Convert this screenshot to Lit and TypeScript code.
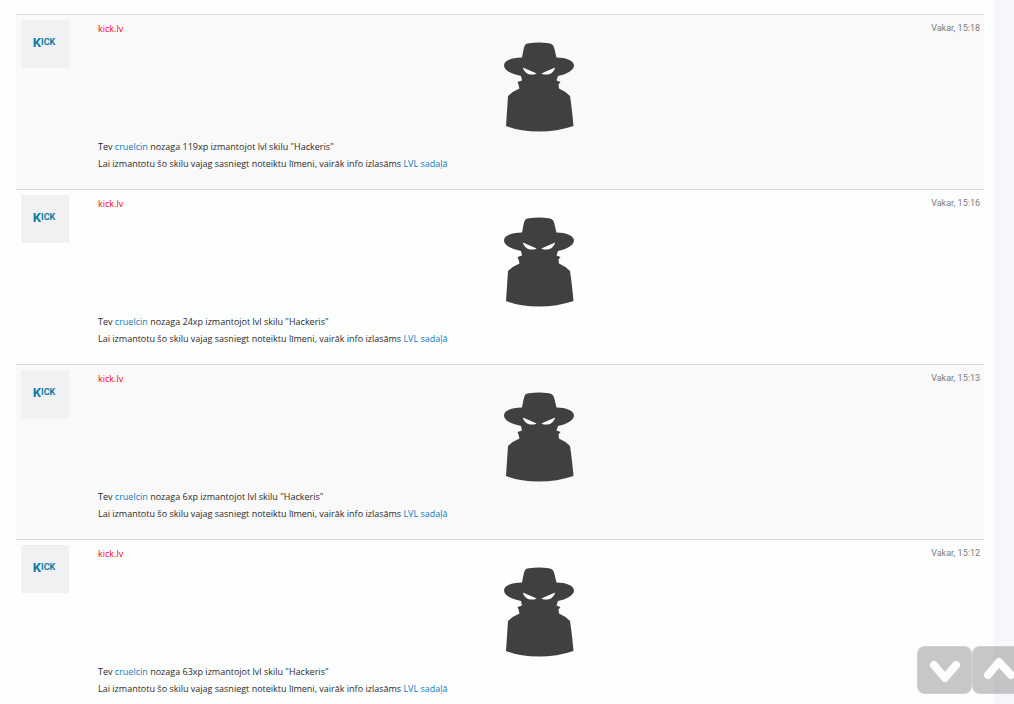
import { LitElement, html, css } from "lit";
import { customElement, property } from "lit/decorators.js";

interface Message {
  time: string;
  xp: number;
}

const messages: Message[] = [
  { time: "Vakar, 15:18", xp: 119 },
  { time: "Vakar, 15:16", xp: 24 },
  { time: "Vakar, 15:13", xp: 6 },
  { time: "Vakar, 15:12", xp: 63 },
];

@customElement("message-row")
class MessageRow extends LitElement {
  @property({ attribute: false }) message!: Message;

  static styles = css`
    :host {
      display: block;
    }
    .row {
      display: grid;
      grid-template-columns: 48px minmax(0, 1fr);
      column-gap: 29px;
      padding: 5px 4px 17px 5px;
      align-items: start;
    }
    .avatar {
      display: flex;
      box-sizing: border-box;
      width: 48px;
      height: 48px;
      padding: 0 2px 4px 0;
      align-items: center;
      justify-content: center;
      background: #f1f1f1;
      color: #0b7ba8;
      font: bold 9px/12px Roboto, sans-serif;
      text-decoration: none;
    }
    .initial {
      font-size: 13px;
      vertical-align: text-top;
    }
    .head {
      display: flex;
      justify-content: space-between;
      line-height: 17px;
    }
    .author {
      color: #ff0022;
      text-decoration: none;
    }
    time {
      color: #7d7d7d;
      font: 9px/17px Roboto, sans-serif;
    }
    .spy {
      display: block;
      width: 70px;
      height: 90px;
      margin: 5px auto 6px;
      fill: #404040;
    }
    p {
      margin: 0;
      line-height: 17px;
    }
    p a {
      color: #0f7dc2;
      text-decoration: none;
    }
  `;

  render() {
    return html`
      <article class="row">
        <a class="avatar" href="#kick"><span><span class="initial">K</span>ICK</span></a>
        <div>
          <div class="head">
            <a class="author" href="#kick">kick.lv</a>
            <time>${this.message.time}</time>
          </div>
          <svg class="spy" viewBox="0 0 70 90" aria-hidden="true">
            <path d="M18 15.5 C19 11 19.5 6 21 3 Q22 1.500 25 1.300 Q35 -0.500 45 1.300 Q48.500 1.800 49.500 4 C51 8 51.500 12 52.500 15.500 C62 15.500 70 18.500 70 23.500 C70 28.500 62 32.500 54 34 L52.500 38.500 L56.500 40 L54.500 42.500 L55 46.500 Q61 49 66 54 Q68 67 69.500 84 Q53 89.500 35 89.500 Q15 89.500 2 84 L4 54 Q9 49 15.500 46.500 L14.500 42.500 L13.500 40 L18 38.500 L17 34 C8 32.500 0 28.500 0 23.500 C0 18.500 8 15.500 18 15.500Z"/>
            <path fill="#fdfdfd" d="M18.800 25.500 L32.700 31.400 C28 33.800 21 33 18.800 25.500ZM51.200 25.500 L37.300 31.400 C42 33.800 49 33 51.200 25.500Z"/>
          </svg>
          <p>Tev <a href="#cruelcin">cruelcin</a> nozaga ${this.message.xp}xp izmantojot lvl skilu "Hackeris"</p>
          <p>Lai izmantotu šo skilu vajag sasniegt noteiktu līmeni, vairāk info izlasāms <a href="#lvl">LVL sadaļā</a></p>
        </div>
      </article>
    `;
  }
}

@customElement("app-root")
class AppRoot extends LitElement {
  static styles = css`
    :host {
      display: block;
      box-sizing: border-box;
      height: 100vh;
      overflow: hidden;
      padding-right: 20px;
      background: #f6f7fc;
      color: #2b2b2b;
      font: 9px/17px "Open Sans", "Noto Sans", sans-serif;
    }
    main {
      box-sizing: border-box;
      min-height: 100vh;
      padding: 14px 10px 0 16px;
      background: #fdfefe;
    }
    .entry {
      border-top: 1px solid #d9dcdc;
    }
    .entry:nth-child(odd) {
      background: #f9f9f9;
    }
    .scroll {
      position: fixed;
      right: -13px;
      bottom: 10px;
      display: flex;
    }
    .scroll button {
      box-sizing: border-box;
      width: 55px;
      height: 48px;
      padding: 0;
      border: 1px solid rgba(225, 228, 226, 0.3);
      border-radius: 8px;
      background: rgba(138, 141, 140, 0.48);
    }
    .scroll svg {
      display: block;
      width: 53px;
      height: 46px;
      fill: none;
      stroke: #fdfdfd;
      stroke-width: 8;
      stroke-linecap: round;
      stroke-linejoin: round;
    }
  `;

  render() {
    return html`
      <main>
        ${messages.map(
          (message) => html`<message-row class="entry" .message=${message}></message-row>`
        )}
      </main>
      <nav class="scroll">
        <button type="button" aria-label="Uz leju">
          <svg viewBox="0 0 53 46"><path d="M16 18 L27 31 L38 18"/></svg>
        </button>
        <button type="button" aria-label="Uz augšu">
          <svg viewBox="0 0 53 46"><path d="M15 28 L26 15 L38 28"/></svg>
        </button>
      </nav>
    `;
  }
}
